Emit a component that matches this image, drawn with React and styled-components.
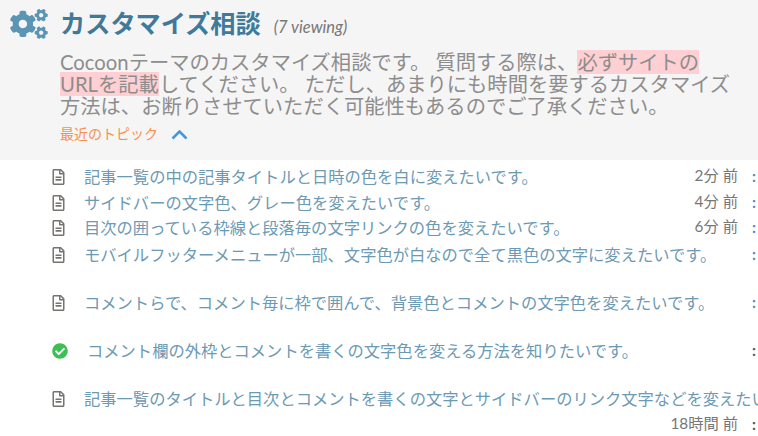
import React from "react";
import styled, { createGlobalStyle } from "styled-components";
import { FaCogs, FaRegFileAlt, FaCheckCircle } from "react-icons/fa";

const Global = createGlobalStyle`
  html, body { margin: 0; padding: 0; background: #fff; }
  body { width: 758px; height: 436px; overflow: hidden; font-family: Lato, "Noto Sans CJK JP", sans-serif; }
`;
const Page = styled.div`
  width: 758px; height: 436px; overflow: hidden; display: flex; flex-direction: column;
`;
const Header = styled.header`
  background: #f5f5f5; height: 160px; box-sizing: border-box; padding: 7px 0 0 10px; flex: none;
  display: grid; grid-template-columns: 50px 1fr; align-content: start;
`;
const HeadIcon = styled(FaCogs)`
  width: 38px; height: 30px; color: #5b95b5; margin-top: 2px;
`;
const TitleLine = styled.div`
  display: flex; align-items: baseline; gap: 13px; height: 41px; line-height: 32px;
`;
const Title = styled.h1`
  margin: 0; font-size: 25.2px; font-weight: 700; color: #3f7a9a;
`;
const Viewing = styled.span`
  font-size: 16.5px; font-style: italic; color: #777;
`;
const Desc = styled.p`
  grid-column: 2; margin: 3px 0 0; width: 674px; font-size: 20.3px; line-height: 22px; color: #8d8d8d;
`;
const Mark = styled.span`
  background: #ffd0d3;
`;
const Recent = styled.div`
  grid-column: 2; display: flex; align-items: center; gap: 13px; margin-top: 7px;
  font-size: 14px; line-height: 20px; color: #f98f4f;
`;
const ChevronSvg = styled.svg`
  width: 17px; height: 11px; fill: none; stroke: #3b9ae0; stroke-width: 2.6;
`;
const List = styled.div`
  display: flex; flex-direction: column; padding-top: 3px; width: 758px;
`;
const Row = styled.div`
  display: flex; flex-wrap: wrap; height: ${p => p.$h}px; box-sizing: border-box; padding-left: 52px;
  align-content: flex-start;
`;
const Main = styled.div`
  display: flex; align-items: center; height: 26px; width: 640px; flex: none; white-space: nowrap;
  font-size: 16.3px; color: #6c9ab4;
`;
const FileIcon = styled(FaRegFileAlt)`
  width: 13px; height: 16px; color: #77736f; flex: none; margin-right: 19px; margin-top: 2px;
`;
const CheckIcon = styled(FaCheckCircle)`
  width: 16px; height: 16px; color: #3ebf55; flex: none; margin-right: 19px; margin-top: 2px;
`;
const Meta = styled.div`
  display: flex; justify-content: flex-end; align-items: center; height: 22px; flex: none; white-space: nowrap;
  width: 704px; margin-left: ${p => (p.$below ? 0 : -640)}px; font-size: 15.3px; color: #777;
  gap: 14px;
`;
const Dots = styled.span`
  color: ${p => p.$c}; font-weight: 700; width: 4px; padding-top: 3px;
`;

const rows = [
  { t: "記事一覧の中の記事タイトルと日時の色を白に変えたいです。", time: "2分 前", h: 26 },
  { t: "サイドバーの文字色、グレー色を変えたいです。", time: "4分 前", h: 25 },
  { t: "目次の囲っている枠線と段落毎の文字リンクの色を変えたいです。", time: "6分 前", h: 27 },
  { t: "モバイルフッターメニューが一部、文字色が白なので全て黒色の文字に変えたいです。", h: 48 },
  { t: "コメントらで、コメント毎に枠で囲んで、背景色とコメントの文字色を変えたいです。", h: 48 },
  { t: "コメント欄の外枠とコメントを書くの文字色を変える方法を知りたいです。", h: 48, done: true },
  { t: "記事一覧のタイトルと目次とコメントを書くの文字とサイドバーのリンク文字などを変えたいです。", time: "18時間 前", h: 52, below: true },
];

export default function App() {
  return (
    <Page>
      <Global />
      <Header>
        <HeadIcon />
        <TitleLine>
          <Title>カスタマイズ相談</Title>
          <Viewing>(7 viewing)</Viewing>
        </TitleLine>
        <Desc>
          Cocoonテーマのカスタマイズ相談です。 質問する際は、<Mark>必ずサイトのURLを記載</Mark>してください。 ただし、あまりにも時間を要するカスタマイズ方法は、お断りさせていただく可能性もあるのでご了承ください。
        </Desc>
        <Recent>
          最近のトピック
          <ChevronSvg viewBox="0 0 17 11"><polyline points="1.5,9.5 8.5,2.5 15.5,9.5" /></ChevronSvg>
        </Recent>
      </Header>
      <List>
        {rows.map((r, i) => (
          <Row key={i} $h={r.h}>
            <Main>
              {r.done ? <CheckIcon /> : <FileIcon />}
              {r.t}
            </Main>
            <Meta $below={r.below}>
              {r.time}
              <Dots $c={i < 5 ? "#4a86d8" : "#555"}>:</Dots>
            </Meta>
          </Row>
        ))}
      </List>
    </Page>
  );
}
